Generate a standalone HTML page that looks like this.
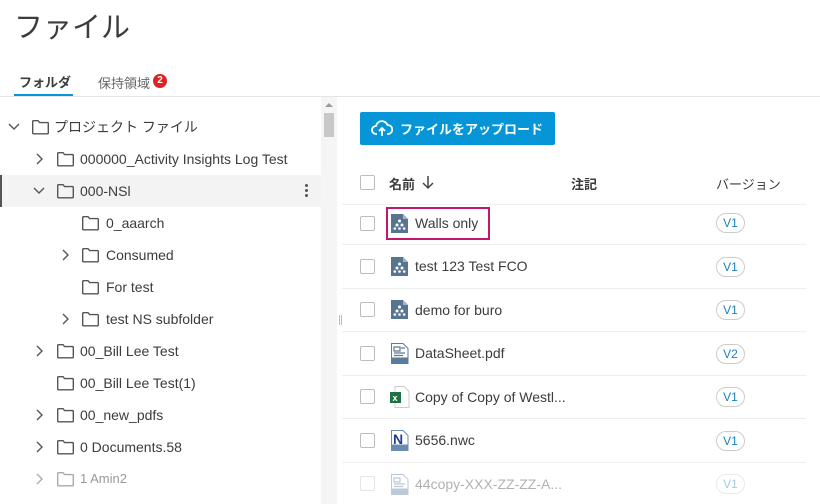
<!DOCTYPE html>
<html><head><meta charset="utf-8"><style>
*{margin:0;padding:0;box-sizing:border-box}
body{width:820px;height:504px;overflow:hidden;background:#fff;font-family:"Liberation Sans","Noto Sans CJK JP",sans-serif;color:#3c3c3c;position:relative}
.a{position:absolute;white-space:nowrap}
.t{font-size:14px;line-height:32px;height:32px}
.fold{position:absolute;width:17px;height:14px}
.chev{position:absolute;width:10px;height:10px}
.cb{position:absolute;width:15px;height:15px;border:1px solid #bdbdbd;border-radius:2px;background:#fff}
.pill{position:absolute;left:716px;width:29px;height:20px;border:1px solid #ccc;border-radius:10px;font-size:12px;color:#1b7fc1;text-align:center;line-height:18px}
.hl{position:absolute;left:342px;width:464px;height:1px;background:#eee}
.fn{font-size:14px}
</style></head><body>
<div class="a" style="left:14px;top:4px;font-size:29px;color:#3c3c3c">ファイル</div>
<div class="a" style="left:19px;top:72px;font-size:13px;font-weight:bold;color:#3c3c3c">フォルダ</div>
<div class="a" style="left:14px;top:94px;width:59px;height:3px;background:#0696d7"></div>
<div class="a" style="left:98px;top:73px;font-size:13px;color:#666">保持領域</div>
<div class="a" style="left:153px;top:74px;width:14px;height:14px;border-radius:7px;background:#dd2222;color:#fff;font-size:10px;font-weight:bold;text-align:center;line-height:14px">2</div>
<div class="a" style="left:0;top:96px;width:820px;height:1px;background:#e6e6e6"></div>
<!-- scroll area -->
<div class="a" style="left:321px;top:97px;width:16px;height:407px;background:#f5f5f5"></div>
<div class="a" style="left:324px;top:113px;width:10px;height:24px;background:#c8c8c8"></div>
<div class="a" style="left:325px;top:103px;width:0;height:0;border-left:4px solid transparent;border-right:4px solid transparent;border-bottom:4px solid #999"></div>
<div class="a" style="left:339px;top:315px;width:1px;height:10px;background:#bbb"></div>
<div class="a" style="left:341px;top:315px;width:1px;height:10px;background:#bbb"></div>
<!-- selected row -->
<div class="a" style="left:0;top:175px;width:321px;height:32px;background:#f3f3f3;border-left:2px solid #555"></div>
<div class="a" style="left:305px;top:184px;width:3px;height:3px;border-radius:2px;background:#555;box-shadow:0 5px 0 #555,0 10px 0 #555"></div>
<svg width="320" height="504" style="position:absolute;left:0;top:0" fill="none" stroke="#555" stroke-width="1.4">
<defs><path id="f" d="M0.7 1.5 Q0.7 0.7 1.5 0.7 H6 L7.6 2.6 H15.5 Q16.3 2.6 16.3 3.4 V13 Q16.3 13.8 15.5 13.8 H1.5 Q0.7 13.8 0.7 13 Z"/></defs>
<!-- row centers: 127,159,191,223,255,287,319,351,383,415,447,479 -->
<path d="M9 124 l5 5 l5 -5"/><use href="#f" x="32" y="120"/>
<path d="M37 154 l5 5 l-5 5"/><use href="#f" x="57" y="152"/>
<path d="M34 188 l5 5 l5 -5"/><use href="#f" x="57" y="184"/>
<use href="#f" x="82" y="216"/>
<path d="M63 250 l5 5 l-5 5"/><use href="#f" x="82" y="248"/>
<use href="#f" x="82" y="280"/>
<path d="M63 314 l5 5 l-5 5"/><use href="#f" x="82" y="312"/>
<path d="M37 346 l5 5 l-5 5"/><use href="#f" x="57" y="344"/>
<use href="#f" x="57" y="376"/>
<path d="M37 410 l5 5 l-5 5"/><use href="#f" x="57" y="408"/>
<path d="M37 442 l5 5 l-5 5"/><use href="#f" x="57" y="440"/>
<g stroke="#aaa"><path d="M37 474 l5 5 l-5 5"/><use href="#f" x="57" y="472"/></g>
</svg>
<div class="a t" style="left:54px;top:111px">プロジェクト ファイル</div>
<div class="a t" style="left:80px;top:143px">000000_Activity Insights Log Test</div>
<div class="a t" style="left:80px;top:175px">000-NSl</div>
<div class="a t" style="left:106px;top:207px">0_aaarch</div>
<div class="a t" style="left:106px;top:239px">Consumed</div>
<div class="a t" style="left:106px;top:271px">For test</div>
<div class="a t" style="left:106px;top:303px">test NS subfolder</div>
<div class="a t" style="left:80px;top:335px">00_Bill Lee Test</div>
<div class="a t" style="left:80px;top:367px">00_Bill Lee Test(1)</div>
<div class="a t" style="left:80px;top:399px">00_new_pdfs</div>
<div class="a t" style="left:80px;top:431px">0 Documents.58</div>
<div class="a t" style="left:80px;top:463px;color:#999;font-size:13px">1 Amin2</div>
<!-- right -->
<div class="a" style="left:360px;top:112px;width:195px;height:33px;background:#0696d7;border-radius:2px"></div>
<svg class="a" style="left:371px;top:119px" width="22" height="20" fill="none" stroke="#fff" stroke-width="1.8"><path d="M6 15 H5 a4 4 0 0 1 0-8 a6 6 0 0 1 11.5-1 a4.5 4.5 0 0 1 0.5 9 H16"/><path d="M11 17 V9 M8 12 l3-3 l3 3"/></svg>
<div class="a" style="left:400px;top:119px;font-size:13px;font-weight:bold;color:#fff">ファイルをアップロード</div>
<div class="cb" style="left:360px;top:175px"></div>
<div class="a" style="left:389px;top:174px;font-size:13px;font-weight:bold">名前</div>
<svg class="a" style="left:421px;top:174px" width="14" height="16" fill="none" stroke="#444" stroke-width="1.5"><path d="M7 2 V14 M2 9 l5 5 l5-5"/></svg>
<div class="a" style="left:571px;top:174px;font-size:13px;font-weight:bold">注記</div>
<div class="a" style="left:716px;top:174px;font-size:13px">バージョン</div>
<div class="hl" style="top:204px"></div>
<div class="hl" style="top:244px"></div>
<div class="hl" style="top:288px"></div>
<div class="hl" style="top:331px"></div>
<div class="hl" style="top:375px"></div>
<div class="hl" style="top:418px"></div>
<div class="hl" style="top:462px"></div>
<!-- rows -->
<svg width="0" height="0" style="position:absolute"><defs>
<g id="rv"><path d="M0 0 H12 L17 5 V19 H0 Z" fill="#587590"/><path d="M12 0 L17 5 H12 Z" fill="#9fb4c8"/><g fill="#fff"><circle cx="8.5" cy="7" r="1.5"/><circle cx="6" cy="11" r="1.5"/><circle cx="11" cy="11" r="1.5"/><circle cx="3.8" cy="14.5" r="1.3"/><circle cx="8.5" cy="14.5" r="1.3"/><circle cx="13.2" cy="14.5" r="1.3"/></g></g>
</defs></svg>
<div class="cb" style="left:360px;top:216px"></div>
<svg class="a" style="left:391px;top:214px" width="18" height="20"><use href="#rv"/></svg>
<div class="a fn" style="left:415px;top:215px">Walls only</div>
<div class="a" style="left:386px;top:207px;width:104px;height:33px;border:2.5px solid #c0186c"></div>
<div class="pill" style="top:213px">V1</div>
<div class="cb" style="left:360px;top:259px"></div>
<svg class="a" style="left:391px;top:257px" width="18" height="20"><use href="#rv"/></svg>
<div class="a fn" style="left:415px;top:258px">test 123 Test FCO</div>
<div class="pill" style="top:257px">V1</div>
<div class="cb" style="left:360px;top:302px"></div>
<svg class="a" style="left:391px;top:300px" width="18" height="20"><use href="#rv"/></svg>
<div class="a fn" style="left:415px;top:302px">demo for buro</div>
<div class="pill" style="top:300px">V1</div>
<div class="cb" style="left:360px;top:346px"></div>
<svg class="a" style="left:391px;top:343px" width="18" height="21"><path d="M0.5 0.5 H12 L17 5.5 V15 H0.5 Z" fill="#fff" stroke="#5b7b9a"/><path d="M3 4 H9 V8 H3Z M3 10 H14 M3 12.5 H12 M10 5 H14" stroke="#5b7b9a" stroke-width="1.2" fill="none"/><rect x="0" y="15" width="17.5" height="6" fill="#5b7b9a"/></svg>
<div class="a fn" style="left:415px;top:345px">DataSheet.pdf</div>
<div class="pill" style="top:344px">V2</div>
<div class="cb" style="left:360px;top:389px"></div>
<svg class="a" style="left:390px;top:386px" width="20" height="22"><path d="M5 0.5 H14 L19 5.5 V21.5 H5 Z" fill="#fff" stroke="#ccc"/><rect x="0" y="6" width="11" height="11" fill="#1e7145"/><text x="2.5" y="15" font-size="9" fill="#fff" font-family="Liberation Sans" font-weight="bold">x</text></svg>
<div class="a fn" style="left:415px;top:389px">Copy of Copy of Westl...</div>
<div class="pill" style="top:387px">V1</div>
<div class="cb" style="left:360px;top:433px"></div>
<svg class="a" style="left:391px;top:430px" width="18" height="21"><path d="M0.5 0.5 H12 L17 5.5 V15 H0.5 Z" fill="#fff" stroke="#6b8cb0"/><text x="2" y="14" font-size="14" font-weight="bold" fill="#1f3f8f" font-family="Liberation Sans">N</text><rect x="0" y="15" width="17.5" height="6" fill="#6b8cb0"/></svg>
<div class="a fn" style="left:415px;top:432px">5656.nwc</div>
<div class="pill" style="top:431px">V1</div>
<div style="opacity:.4">
<div class="cb" style="left:360px;top:476px"></div>
<svg class="a" style="left:391px;top:474px" width="18" height="21"><path d="M0.5 0.5 H12 L17 5.5 V15 H0.5 Z" fill="#fff" stroke="#5b7b9a"/><path d="M3 4 H9 V8 H3Z M3 10 H14 M3 12.5 H12" stroke="#5b7b9a" stroke-width="1.2" fill="none"/><rect x="0" y="15" width="17.5" height="6" fill="#5b7b9a"/></svg>
<div class="a fn" style="left:415px;top:476px">44copy-XXX-ZZ-ZZ-A...</div>
<div class="pill" style="top:474px">V1</div>
</div>
</body></html>
